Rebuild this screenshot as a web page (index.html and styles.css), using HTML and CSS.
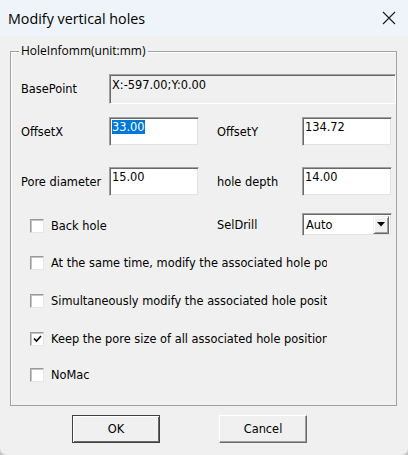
FILE: index.html
```html
<!DOCTYPE html>
<html>
<head>
<meta charset="utf-8">
<link rel="stylesheet" href="styles.css">
</head>
<body>
<div class="window">
  <div class="titlebar">
    <span class="title">Modify vertical holes</span>
    <span class="close">
      <svg width="14" height="14" viewBox="0 0 14 14"><path d="M1 1 L13 13 M13 1 L1 13" stroke="#1a1a1a" stroke-width="1.1" fill="none"/></svg>
    </span>
  </div>
  <div class="group">
    <div class="legend">HoleInfomm(unit:mm)</div>
    <div class="row row-base">
      <span class="label">BasePoint</span>
      <div class="static">X:-597.00;Y:0.00</div>
    </div>
    <div class="row row-field row-f1">
      <span class="label">OffsetX</span>
      <div class="edit"><span class="sel">33.00</span></div>
      <span class="label label2">OffsetY</span>
      <div class="edit">134.72</div>
    </div>
    <div class="row row-field row-f2">
      <span class="label">Pore diameter</span>
      <div class="edit">15.00</div>
      <span class="label label2">hole depth</span>
      <div class="edit">14.00</div>
    </div>
    <div class="row row-back">
      <div class="back-cell">
        <span class="cb"></span><span class="cb-text">Back hole</span>
      </div>
      <span class="label label2">SelDrill</span>
      <div class="combo">
        <span class="combo-text">Auto</span>
        <span class="drop"><svg width="8" height="5" viewBox="0 0 8 5"><path d="M0 0 H8 L4 4.5 Z" fill="#000"/></svg></span>
      </div>
    </div>
    <div class="checks">
      <div class="check-row"><span class="cb"></span><span class="cb-text">At the same time, modify the associated hole po</span></div>
      <div class="check-row"><span class="cb"></span><span class="cb-text">Simultaneously modify the associated hole positi</span></div>
      <div class="check-row"><span class="cb checked"><svg width="9" height="8" viewBox="0 0 9 8"><path d="M1 3.5 L3.5 6 L8 1" stroke="#000" stroke-width="1.6" fill="none"/></svg></span><span class="cb-text">Keep the pore size of all associated hole position</span></div>
      <div class="check-row last"><span class="cb"></span><span class="cb-text">NoMac</span></div>
    </div>
  </div>
  <div class="buttons">
    <button class="btn btn-default">OK</button>
    <button class="btn">Cancel</button>
  </div>
</div>
</body>
</html>
```

FILE: styles.css
```css
html, body {
  margin: 0;
  padding: 0;
  background: #c8c8c8;
}
.window {
  width: 408px;
  height: 455px;
  background: #f0f0f0;
  border-radius: 0 0 7px 7px;
  overflow: hidden;
  font-family: "DejaVu Sans", sans-serif;
  font-size: 11.4px;
  color: #000;
}
.titlebar {
  height: 36px;
  background: #eef4f9;
  display: flex;
  align-items: center;
  justify-content: space-between;
  padding: 0 12px 0 8px;
}
.title {
  font-family: "Open Sans", sans-serif;
  font-size: 14.3px;
  color: #000;
}
.close {
  display: flex;
  width: 14px;
  height: 14px;
}
.group {
  margin: 15px 11px 0 10px;
  border: 1px solid #a0a0a0;
  box-shadow: inset 1px 1px 0 #ffffff;
  padding: 0 0 13px 10px;
}
.legend {
  font-family: "Open Sans", sans-serif;
  font-size: 12px;
  line-height: 16px;
  height: 16px;
  width: max-content;
  margin: -9px 0 0 -2px;
  padding: 0 2px;
  background: #f0f0f0;
}
.row {
  display: flex;
  align-items: center;
}
.label {
  width: 88px;
  flex: none;
  white-space: nowrap;
}
.label2 {
  margin-left: 18px;
  width: 85px;
}
.row-base {
  margin-top: 15px;
  height: 30px;
}
.static {
  flex: 1;
  height: 30px;
  box-sizing: border-box;
  border: 1px solid;
  border-color: #a0a0a0 #ffffff #ffffff #a0a0a0;
  box-shadow: inset 1px 1px 0 #696969;
  padding: 3px 2px;
  line-height: 14px;
}
.row-f1 {
  margin-top: 13px;
  height: 29px;
}
.row-f2 {
  margin-top: 21px;
  height: 29px;
}
.edit {
  width: 90px;
  height: 29px;
  flex: none;
  box-sizing: border-box;
  background: #fff;
  border: 1px solid;
  border-color: #a0a0a0 #f0f0f0 #f0f0f0 #a0a0a0;
  box-shadow: inset 1px 1px 0 #696969, inset -1px -1px 0 #e3e3e3;
  padding: 2px 2px;
  line-height: 14px;
}
.sel {
  background: #0078d7;
  color: #fff;
  display: inline-block;
}
.row-back {
  margin-top: 17px;
  height: 23px;
}
.back-cell {
  width: 178px;
  flex: none;
  display: flex;
  align-items: center;
  padding-top: 3px;
}
.cb {
  width: 14px;
  height: 14px;
  box-sizing: border-box;
  flex: none;
  margin-left: 9px;
  background: #fff;
  border: 1px solid;
  border-color: #9a9a9a #e6e6e6 #e6e6e6 #9a9a9a;
  box-shadow: inset 1px 1px 0 #c4c4c4;
  display: flex;
  align-items: center;
  justify-content: center;
}
.cb-text {
  margin-left: 7px;
  white-space: nowrap;
  overflow: hidden;
  max-width: 276px;
}
.combo {
  width: 90px;
  height: 23px;
  flex: none;
  box-sizing: border-box;
  background: #fff;
  border: 1px solid;
  border-color: #a0a0a0 #f0f0f0 #f0f0f0 #a0a0a0;
  box-shadow: inset 1px 1px 0 #696969, inset -1px -1px 0 #e3e3e3;
  display: flex;
  align-items: center;
  justify-content: space-between;
  padding: 2px 2px 2px 3px;
}
.drop {
  width: 16px;
  height: 18px;
  box-sizing: border-box;
  background: #f0f0f0;
  border: 1px solid;
  border-color: #f0f0f0 #696969 #696969 #f0f0f0;
  box-shadow: inset 1px 1px 0 #ffffff, inset -1px -1px 0 #a0a0a0;
  display: flex;
  align-items: center;
  justify-content: center;
}
.checks {
  margin-top: 8px;
}
.check-row {
  height: 38px;
  display: flex;
  align-items: center;
}
.check-row.last {
  height: 34px;
}
.buttons {
  margin-top: 9px;
  display: flex;
  padding-left: 72px;
  gap: 59px;
}
.btn {
  width: 88px;
  height: 28px;
  box-sizing: border-box;
  background: #f0f0f0;
  font-family: "DejaVu Sans", sans-serif;
  font-size: 11.4px;
  color: #000;
  border: 1px solid;
  border-color: #ffffff #696969 #696969 #ffffff;
  box-shadow: inset -1px -1px 0 #a0a0a0;
  padding: 0;
}
.btn-default {
  border-color: #404040;
  box-shadow: inset 1px 1px 0 #ffffff, inset -1px -1px 0 #696969;
}
```
